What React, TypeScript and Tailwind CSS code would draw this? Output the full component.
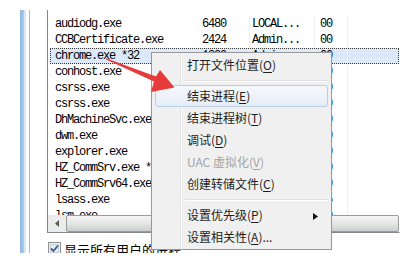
const mono = { fontFamily: '"Liberation Mono", "DejaVu Sans Mono", monospace' }
const cjk = { fontFamily: '"Noto Sans CJK SC", "Noto Sans", sans-serif' }

type Proc = { name: string; pid: string; user: string; cpu: string; selected?: boolean }

const procs: Proc[] = [
  { name: 'audiodg.exe', pid: '6480', user: 'LOCAL...', cpu: '00' },
  { name: 'CCBCertificate.exe', pid: '2424', user: 'Admin...', cpu: '00' },
  { name: 'chrome.exe *32', pid: '1320', user: 'Admin...', cpu: '00', selected: true },
  { name: 'conhost.exe', pid: '3556', user: 'Admin...', cpu: '00' },
  { name: 'csrss.exe', pid: '412', user: 'SYSTEM', cpu: '00' },
  { name: 'csrss.exe', pid: '488', user: 'SYSTEM', cpu: '00' },
  { name: 'DhMachineSvc.exe', pid: '1764', user: 'SYSTEM', cpu: '00' },
  { name: 'dwm.exe', pid: '2700', user: 'Admin...', cpu: '00' },
  { name: 'explorer.exe', pid: '2744', user: 'Admin...', cpu: '00' },
  { name: 'HZ_CommSrv.exe *32', pid: '1880', user: 'SYSTEM', cpu: '00' },
  { name: 'HZ_CommSrv64.exe', pid: '1912', user: 'SYSTEM', cpu: '00' },
  { name: 'lsass.exe', pid: '548', user: 'SYSTEM', cpu: '05' },
  { name: 'lsm.exe', pid: '556', user: 'SYSTEM', cpu: '00' },
]

type Item = { label: string; key: string; tail?: string; disabled?: boolean; active?: boolean; sub?: boolean } | 'sep'

const menu: Item[] = [
  { label: '打开文件位置', key: 'O' },
  'sep',
  { label: '结束进程', key: 'E', active: true },
  { label: '结束进程树', key: 'T' },
  { label: '调试', key: 'D' },
  { label: 'UAC 虚拟化', key: 'V', disabled: true },
  { label: '创建转储文件', key: 'C' },
  'sep',
  { label: '设置优先级', key: 'P', sub: true },
  { label: '设置相关性', key: 'A', tail: '...' },
]

function ProcRow({ p }: { p: Proc }) {
  return (
    <div
      className={`ml-[2px] h-[16px] flex items-center text-[12px] tracking-[-1.2px] text-black border ${
        p.selected ? 'border-dotted border-[#3a3a3a] bg-[#dce9f9]' : 'border-transparent'
      }`}
      style={mono}
    >
      <div className="w-[149px] pl-[4px] whitespace-nowrap overflow-hidden">{p.name}</div>
      <div className="w-[50px] h-full pl-[2px] flex items-center border-r border-[#eeeeee]">{p.pid}</div>
      <div className="w-[65px] h-full pl-[2px] flex items-center border-r border-[#eeeeee]">{p.user}</div>
      <div className="w-[33px] h-full pl-[5px] flex items-center border-r border-[#eeeeee]">{p.cpu}</div>
      <div className="flex-1" />
    </div>
  )
}

function ContextMenu() {
  return (
    <div
      className="absolute left-[151px] top-[52px] w-[181px] border border-[#979797] bg-[#f0f0f0] px-[3px] py-[1px]"
      style={cjk}
    >
      <div className="absolute top-0 bottom-0 left-[28px] w-px bg-[#e2e3e3]" />
      <div className="absolute top-0 bottom-0 left-[29px] w-px bg-white" />
      {menu.map((m, i) =>
        m === 'sep' ? (
          <div key={i} className="h-[9px] pl-[30px] flex flex-col justify-center">
            <div className="h-px bg-[#e0e0e0]" />
            <div className="h-px bg-white" />
          </div>
        ) : (
          <div
            key={i}
            className={`relative h-[22px] flex items-center pl-[31px] text-[12px] rounded-[3px] border ${
              m.active ? 'border-[#b9cde3] bg-gradient-to-b from-[#f5f8fc] to-[#e7eef7]' : 'border-transparent'
            } ${m.disabled ? 'text-[#a3a3a3]' : 'text-[#1e1e1e]'}`}
          >
            <span>
              {m.label}(<span className="underline underline-offset-2">{m.key}</span>){m.tail}
            </span>
            {m.sub && (
              <svg className="absolute right-[9px] top-[8px]" width="5" height="7" viewBox="0 0 5 7">
                <polygon points="0,0 5,3.5 0,7" fill="#111" />
              </svg>
            )}
          </div>
        ),
      )}
    </div>
  )
}

export default function App() {
  return (
    <div className="relative w-[418px] h-[269px] bg-white overflow-hidden">
      <div className="h-[253px] overflow-hidden flex pt-[10px]">
        <div className="w-[20px]" />
        <div className="w-[4px] bg-gradient-to-r from-[#8fb7de] to-[#a9cbea]" />
        <div className="w-[2px] bg-[#d7e7f5]" />
        <div className="w-[3px]" />
        <div className="w-px bg-[#b9b9b9]" />
        <div className="w-[17px]" />

        <div className="w-[353px] flex flex-col">
          <div className="h-[223px] flex flex-col border-l border-r border-b border-[#828790] border-r-transparent">
            <div className="h-[205px] pt-[6px] overflow-hidden">
              {procs.map((p, i) => (
                <ProcRow key={i} p={p} />
              ))}
            </div>
            <div className="h-[17px] flex bg-[#ececec]">
              <div className="w-[17px] flex items-center justify-center">
                <svg width="4" height="7" viewBox="0 0 4 7">
                  <polygon points="4,0 0,3.5 4,7" fill="#5a5a5a" />
                </svg>
              </div>
              <div className="flex-1 ml-[1px] rounded-[2px] border border-[#9b9b9b] bg-gradient-to-b from-[#f4f4f4] via-[#e6e6e6] to-[#cdcdcd]" />
            </div>
          </div>

          <div className="mt-[9px] flex items-start gap-[3px]">
            <svg className="ml-[1px]" width="13" height="13" viewBox="0 0 13 13">
              <rect x="0.5" y="0.5" width="12" height="12" fill="#f4f4f4" stroke="#8e8f8f" />
              <rect x="2.5" y="2.5" width="8" height="8" fill="#e9eef6" stroke="#c7cdd6" />
              <path d="M3 6.5 L5.5 9 L10 3.5" fill="none" stroke="#3c5a8c" strokeWidth="1.8" />
            </svg>
            <span className="text-[13px] leading-[15px] text-black whitespace-nowrap" style={cjk}>
              显示所有用户的进程
            </span>
          </div>
        </div>
      </div>

      <ContextMenu />

      <svg className="absolute inset-0 pointer-events-none" width="418" height="269" viewBox="0 0 418 269">
        <polygon
          points="106,58.3 156,76.6 160,70 174.5,87.5 151,92 154,81.4 106,59.6"
          fill="#e53b3a"
        />
      </svg>
    </div>
  )
}
